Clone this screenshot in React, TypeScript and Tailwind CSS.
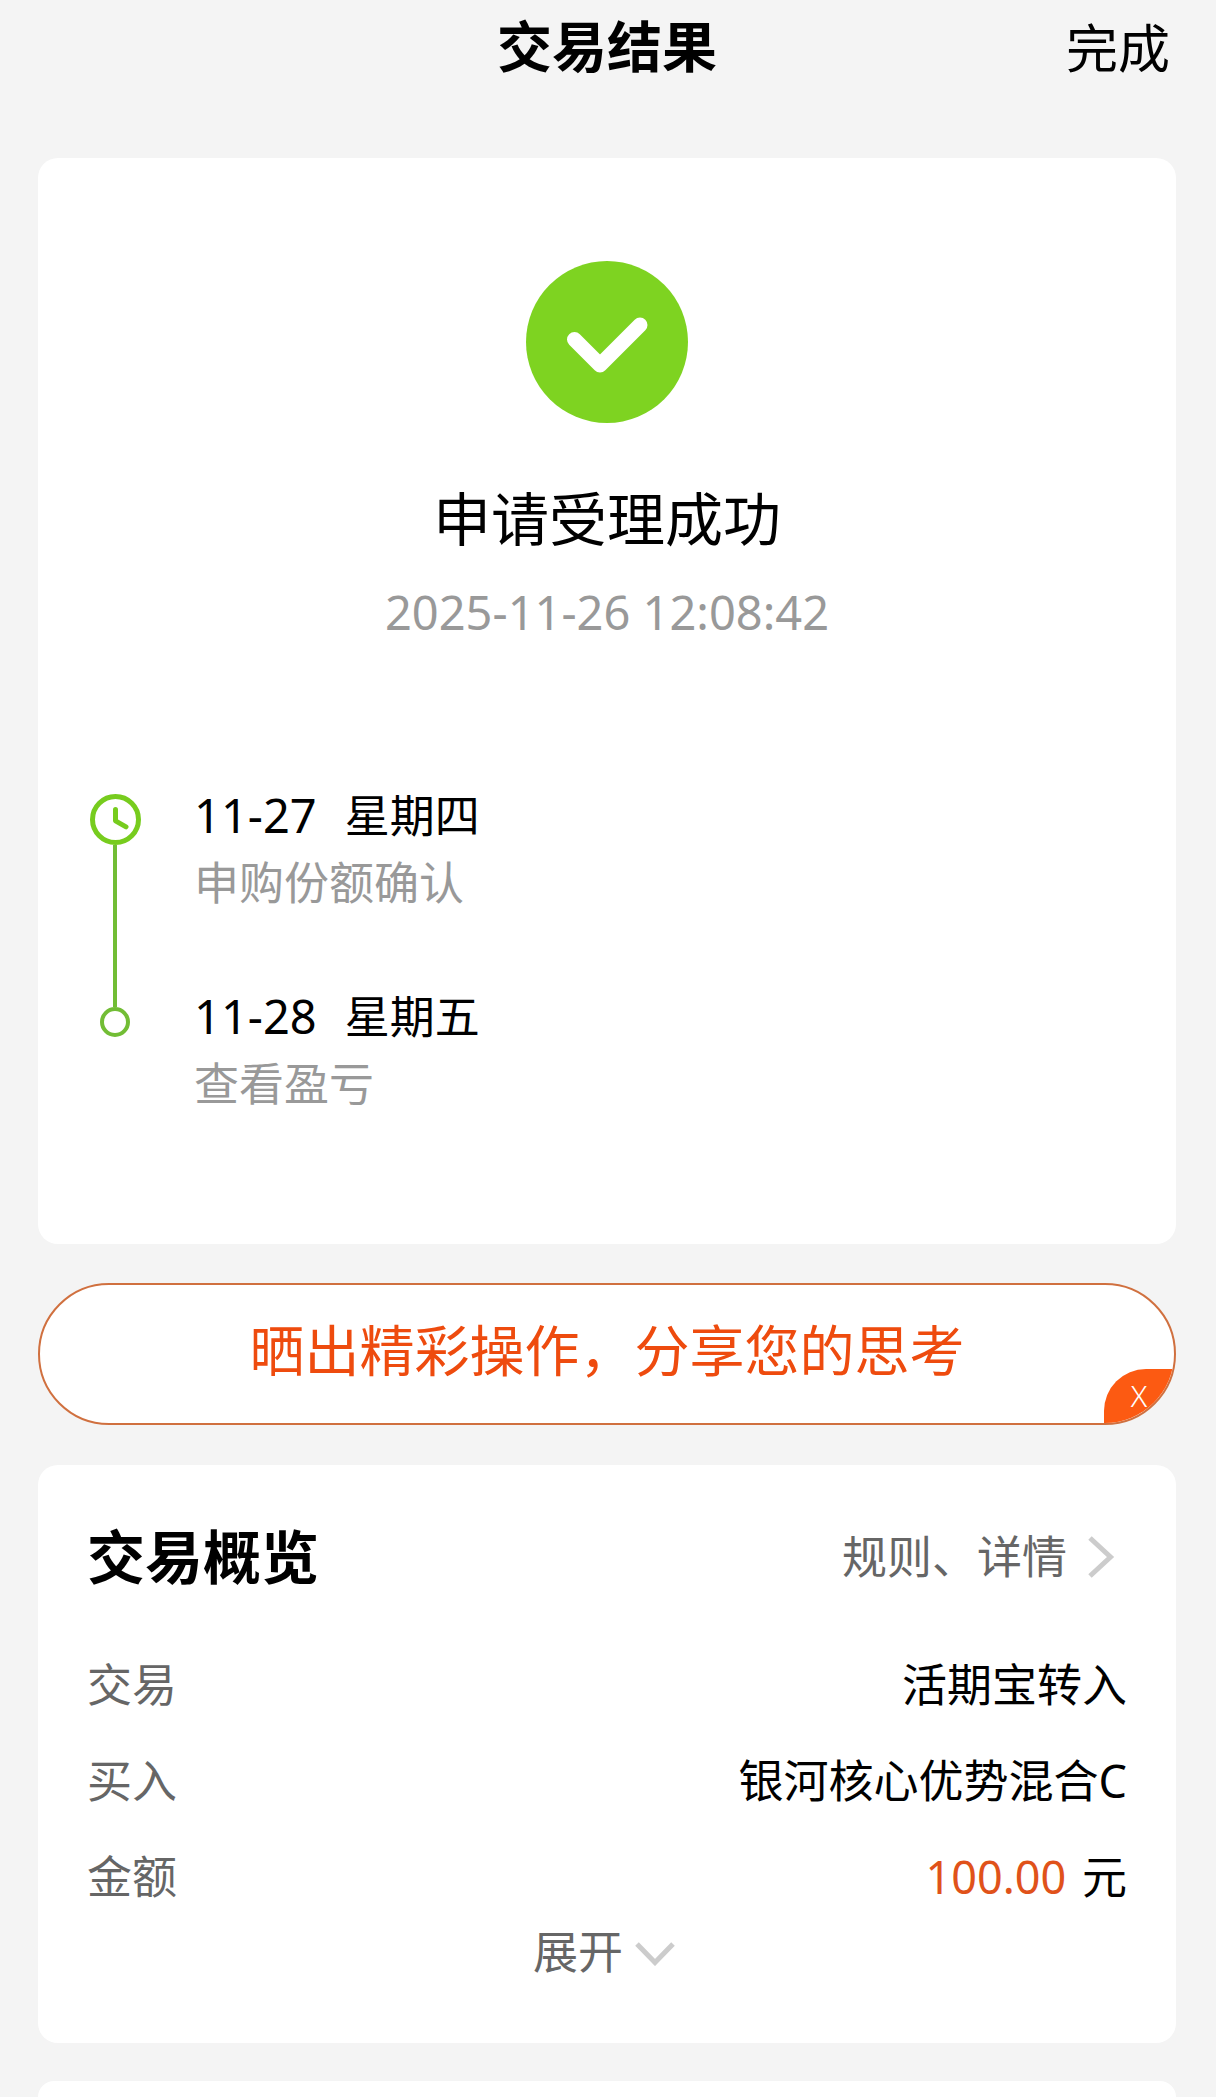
import React from "react";

const milestones = [
  { date: "11-27", weekday: "星期四", note: "申购份额确认" },
  { date: "11-28", weekday: "星期五", note: "查看盈亏" },
];

function SuccessIcon() {
  return (
    <svg className="size-[162px]" viewBox="0 0 162 162" fill="none" aria-hidden="true">
      <circle cx="81" cy="81" r="81" fill="#7ed321" />
      <path d="M48.5 78.5 74 104l40-40" stroke="#fff" strokeWidth="15" strokeLinecap="round" strokeLinejoin="round" />
    </svg>
  );
}

function ClockIcon() {
  return (
    <svg className="size-[51px] shrink-0" viewBox="0 0 51 51" fill="none" stroke="#77cc1e" aria-hidden="true">
      <circle cx="25.5" cy="25.5" r="23" strokeWidth="5" />
      <path d="M25.5 15.5v11.3l10.5 6" strokeWidth="5" strokeLinecap="round" strokeLinejoin="round" />
    </svg>
  );
}

function Timeline() {
  return (
    <ol className="mt-[137px] w-full pl-[51px]">
      {milestones.map((m, i) => {
        const last = i === milestones.length - 1;
        return (
          <li key={m.date} className="flex gap-[53px]">
            <div className="flex w-[52px] flex-col items-center">
              {last ? (
                <>
                  <div className="h-6 w-1 bg-[#72bd35]" />
                  <div className="size-[30px] rounded-full border-4 border-[#72bd35]" />
                </>
              ) : (
                <>
                  <div className="h-3" />
                  <ClockIcon />
                  <div className="w-1 grow bg-[#72bd35]" />
                </>
              )}
            </div>
            <div className={last ? "leading-[67px]" : "pb-[67px] leading-[67px]"}>
              <p className="flex gap-7">
                <span className="text-[47px]">{m.date}</span>
                <span>{m.weekday}</span>
              </p>
              <p className="text-[#999]">{m.note}</p>
            </div>
          </li>
        );
      })}
    </ol>
  );
}

function Row({ label, children }: { label: string; children: React.ReactNode }) {
  return (
    <div className="flex justify-between leading-[96px]">
      <dt className="text-[#666]">{label}</dt>
      <dd>{children}</dd>
    </div>
  );
}

export default function App() {
  return (
    <div className="flex min-h-screen flex-col bg-[#f4f4f4] pr-10 pl-[38px] font-['Noto_Sans','Noto_Sans_CJK_SC',sans-serif] text-[45px] text-black">
      <header className="grid grid-cols-[1fr_auto_1fr] items-start pb-[62px]">
        <h1 className="col-start-2 text-[55px] leading-[92px] font-bold">交易结果</h1>
        <button type="button" className="mr-1.5 justify-self-end text-[52px] leading-[96px]">
          完成
        </button>
      </header>

      <main className="flex grow flex-col">
        <section className="flex flex-col items-center rounded-[20px] bg-white pt-[103px] pb-[127px]">
          <SuccessIcon />
          <h2 className="mt-14 text-[58px] leading-[80px]">申请受理成功</h2>
          <time className="mt-5 text-[47px] leading-[66px] text-[#999]">2025-11-26 12:08:42</time>
          <Timeline />
        </section>

        <div className="relative mt-[39px] overflow-hidden rounded-full border-2 border-[#d0703f] bg-white">
          <button type="button" className="block w-full pb-2 text-center text-[55px] leading-[130px] text-[#ee4b0e]">
            晒出精彩操作，分享您的思考
          </button>
          <button
            type="button"
            aria-label="关闭"
            className="absolute right-0 bottom-0 h-[54px] w-[70px] rounded-tl-[42px] bg-[#fc5a12] text-center text-[30px] leading-[54px] font-light text-white"
          >
            X
          </button>
        </div>

        <section className="mt-10 rounded-[20px] bg-white px-[49px] pt-[52px] pb-16">
          <div className="flex items-center justify-between leading-[80px]">
            <h2 className="text-[58px] font-bold">交易概览</h2>
            <a href="#details" className="mr-3 flex items-center gap-5 text-[#666]">
              规则、详情
              <svg className="h-[42px] w-7" viewBox="0 0 28 42" fill="none" aria-hidden="true">
                <path d="M3 2l20.500 19L3 40" stroke="#ccc" strokeWidth="5" />
              </svg>
            </a>
          </div>
          <dl className="mt-10">
            <Row label="交易">活期宝转入</Row>
            <Row label="买入">银河核心优势混合C</Row>
            <Row label="金额">
              <span className="mr-1 text-[#e0521a]">100.00</span> 元
            </Row>
          </dl>
          <button type="button" className="mx-auto flex items-center gap-3 pr-1.5 leading-[54px] text-[#666]">
            展开
            <svg className="mt-1 h-6 w-10" viewBox="0 0 40 24" fill="none" aria-hidden="true">
              <path d="M2 2l18 18.500L38 2" stroke="#ccc" strokeWidth="5" />
            </svg>
          </button>
        </section>

        <section className="mt-[38px] min-h-4 grow rounded-t-[20px] bg-white" />
      </main>
    </div>
  );
}
